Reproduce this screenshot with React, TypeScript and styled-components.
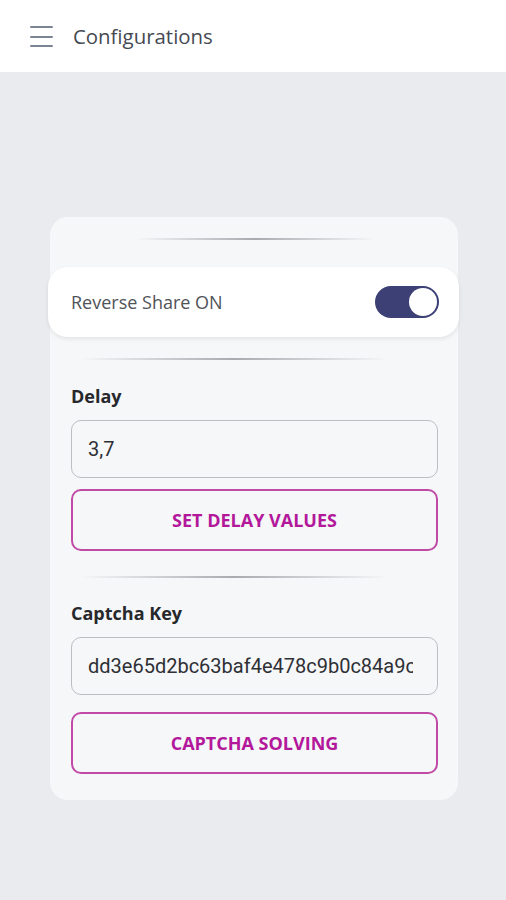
import React, { useState } from 'react'
import styled, { createGlobalStyle } from 'styled-components'

const GlobalStyle = createGlobalStyle`
  html, body {
    margin: 0;
    padding: 0;
    background: #e9ebee;
    font-family: 'Open Sans', 'Noto Sans', sans-serif;
  }
`

const Page = styled.div`
  min-height: 900px;
  background: #e9ebee;
`

const Header = styled.header`
  height: 72px;
  background: #ffffff;
  display: flex;
  align-items: center;
  padding-left: 30px;
  gap: 20px;
`

const MenuButton = styled.div`
  width: 23px;
  height: 21px;
  display: flex;
  flex-direction: column;
  justify-content: space-between;
  margin-top: 1px;
  span {
    display: block;
    height: 2px;
    background: #7a8494;
    border-radius: 1px;
  }
`

const Title = styled.h1`
  margin: 0;
  font-size: 20.4px;
  font-weight: 400;
  color: #454a52;
`

const Card = styled.div`
  margin: 145px 48px 0 50px;
  background: #f6f7f9;
  border-radius: 18px;
  padding: 21px 0 26px;
  display: flex;
  flex-direction: column;
`

interface DividerProps {
  left: number
  right: number
}
const Divider = styled.div<DividerProps>`
  height: 2px;
  margin-left: ${({ left }) => left}px;
  margin-right: ${({ right }) => right}px;
  background: linear-gradient(
    to right,
    rgba(180, 182, 188, 0),
    rgba(160, 162, 168, 0.9) 50%,
    rgba(180, 182, 188, 0)
  );
`

const ToggleRow = styled.div`
  margin: 27px -1px 21px -2px;
  height: 70px;
  background: #ffffff;
  border-radius: 20px;
  box-shadow: 0 2px 4px rgba(0, 0, 0, 0.08);
  display: flex;
  align-items: center;
  justify-content: space-between;
  padding: 0 20px 0 23px;
`

const ToggleLabel = styled.span`
  font-size: 18px;
  color: #505359;
`

interface SwitchProps {
  on: boolean
}
const Switch = styled.div<SwitchProps>`
  width: 64px;
  height: 32px;
  border-radius: 16px;
  background: ${({ on }) => (on ? '#3c4075' : '#c9cbd2')};
  position: relative;
  cursor: pointer;
  &::after {
    content: '';
    position: absolute;
    top: 2px;
    left: ${({ on }) => (on ? '34px' : '2px')};
    width: 28px;
    height: 28px;
    border-radius: 50%;
    background: #ffffff;
  }
`

interface SectionProps {
  top: number
}
const Section = styled.div<SectionProps>`
  padding: 0 20px 0 21px;
  margin-top: ${({ top }) => top}px;
  display: flex;
  flex-direction: column;
`

const Label = styled.label`
  font-size: 18px;
  font-weight: 700;
  color: #26282c;
  line-height: 24px;
`

const Input = styled.input`
  margin-top: 12px;
  height: 58px;
  box-sizing: border-box;
  border: 1px solid #bcbec3;
  border-radius: 10px;
  background: #f6f7f9;
  padding: 0 24px 0 16px;
  font-family: Roboto, 'Noto Sans', sans-serif;
  font-size: 20px;
  color: #2e3035;
  outline: none;
  width: 100%;
`

interface ActionProps {
  gap: number
}
const ActionButton = styled.button<ActionProps>`
  margin-top: ${({ gap }) => gap}px;
  height: 62px;
  border: 2px solid #c04aa5;
  border-radius: 10px;
  background: transparent;
  font-family: 'Open Sans', 'Noto Sans', sans-serif;
  font-size: 18px;
  font-weight: 700;
  color: #b3189b;
  cursor: pointer;
`

export default function App() {
  const [shareOn, setShareOn] = useState(true)
  const [delay, setDelay] = useState('3,7')
  const [captcha, setCaptcha] = useState('dd3e65d2bc63baf4e478c9b0c84a9c1f')

  return (
    <Page>
      <GlobalStyle />
      <Header>
        <MenuButton>
          <span />
          <span />
          <span />
        </MenuButton>
        <Title>Configurations</Title>
      </Header>
      <Card>
        <Divider left={85} right={83} />
        <ToggleRow>
          <ToggleLabel>Reverse Share ON</ToggleLabel>
          <Switch on={shareOn} onClick={() => setShareOn(!shareOn)} />
        </ToggleRow>
        <Divider left={30} right={70} />
        <Section top={24}>
          <Label>Delay</Label>
          <Input value={delay} onChange={e => setDelay(e.target.value)} />
          <ActionButton gap={11}>SET DELAY VALUES</ActionButton>
        </Section>
        <Divider left={30} right={70} style={{ marginTop: 25 }} />
        <Section top={23}>
          <Label>Captcha Key</Label>
          <Input value={captcha} onChange={e => setCaptcha(e.target.value)} />
          <ActionButton gap={17}>CAPTCHA SOLVING</ActionButton>
        </Section>
      </Card>
    </Page>
  )
}
